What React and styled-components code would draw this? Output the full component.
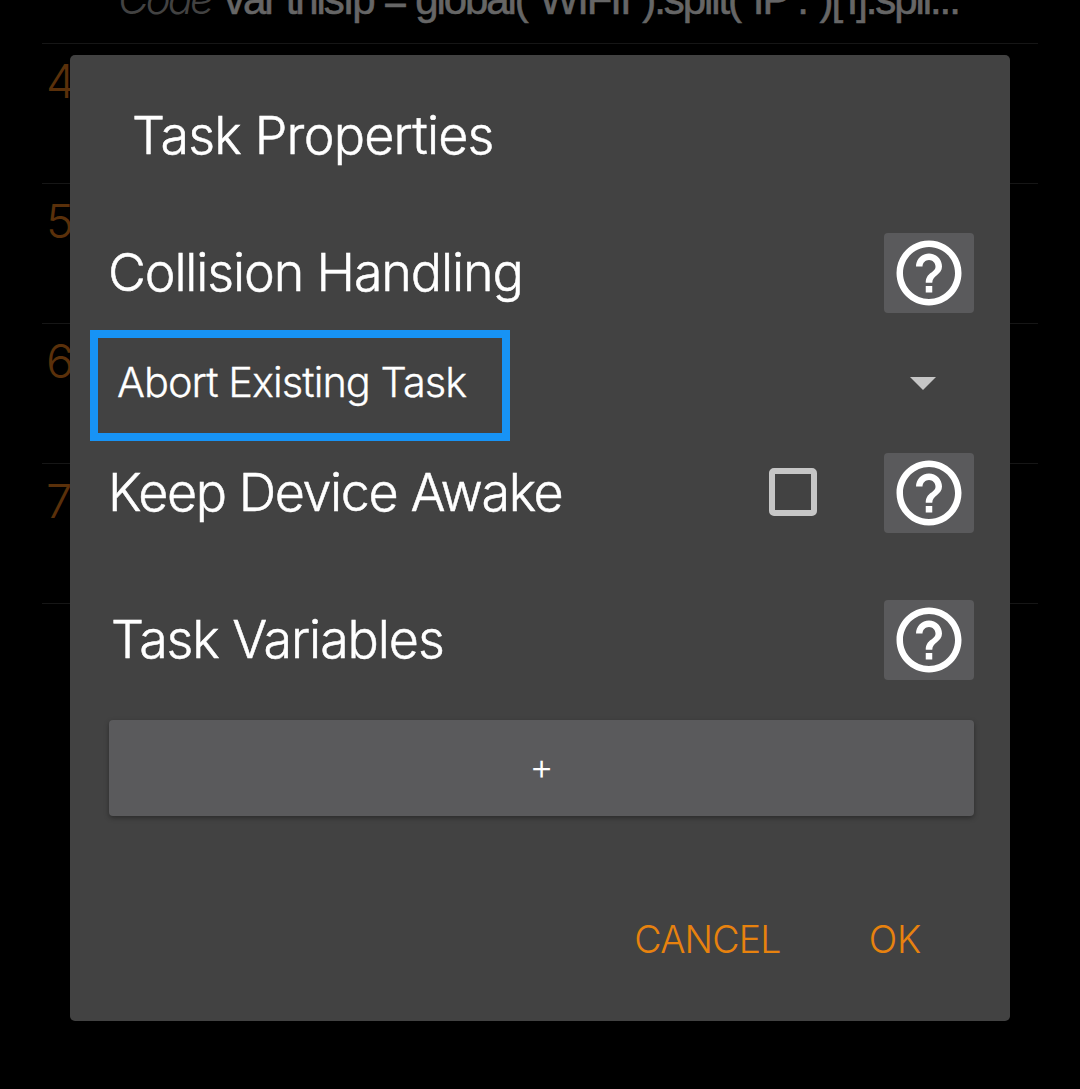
import React from "react";
import styled, { createGlobalStyle } from "styled-components";

const Global = createGlobalStyle`
  * { box-sizing: border-box; }
  body { margin: 0; background: #000; }
  button { border: 0; padding: 0; font: inherit; color: inherit; }
`;

const Screen = styled.div`
  position: relative;
  width: 1080px;
  height: 1089px;
  overflow: hidden;
  background: #000;
  font-family: Inter, "Liberation Sans", sans-serif;
  font-weight: 300;
`;

const ActionList = styled.div`
  display: flex;
  flex-direction: column;
  width: 996px;
  margin-left: 42px;
`;

const ActionRow = styled.div`
  height: ${(p) => (p.$first ? 44 : 140)}px;
  border-bottom: 1px solid #161616;
`;

const ActionNumber = styled.div`
  padding: 7px 0 0 4px;
  font-size: 47px;
  line-height: 60px;
  color: #5a300a;
`;

const CodeLine = styled.div`
  display: flex;
  margin-top: -27px;
  padding-left: 76px;
  line-height: 52px;
  white-space: pre;
`;

const CodeLabel = styled.span`
  width: 106px;
  font-size: 42px;
  font-style: italic;
  letter-spacing: -2.9px;
  color: #424242;
`;

const CodeText = styled.span`
  font-family: "Liberation Sans", sans-serif;
  font-size: 42px;
  font-weight: 400;
  letter-spacing: -2.08px;
  -webkit-text-stroke: 0.6px #666;
  color: #666;
`;

const CodeDigit = styled.span`
  font-family: Inter, sans-serif;
`;

const Dialog = styled.div`
  position: absolute;
  left: 70px;
  top: 55px;
  width: 940px;
  height: 966px;
  display: flex;
  flex-direction: column;
  padding: 0 36px 0 39px;
  border-radius: 5px;
  background: #424242;
  color: #fff;
`;

const Title = styled.div`
  margin: 50px 0 0 23px;
  height: 62px;
  font-size: 52px;
  line-height: 62px;
  letter-spacing: ${(p) => p.$track}px;
  -webkit-text-stroke: 0.5px #fff;
  white-space: nowrap;
`;

const Row = styled.div`
  display: flex;
  align-items: center;
  height: 80px;
  margin-top: ${(p) => p.$gap}px;
`;

const Label = styled.div`
  flex: 1;
  padding-left: ${(p) => p.$indent || 0}px;
  margin-left: -1px;
  font-size: 52px;
  line-height: 62px;
  letter-spacing: ${(p) => p.$track}px;
  -webkit-text-stroke: 0.5px #fff;
  white-space: nowrap;
`;

const HelpButton = styled.button`
  display: flex;
  align-items: center;
  justify-content: center;
  width: 90px;
  height: 80px;
  border-radius: 4px;
  background: #5a5a5c;
`;

const Checkbox = styled.div`
  width: 48px;
  height: 48px;
  margin: 0 67px 2px 0;
  border: 6px solid #c6c6c6;
  border-radius: 5px;
`;

const Spinner = styled.div`
  display: flex;
  align-items: center;
  justify-content: space-between;
  height: 112px;
  margin: 16px 0 0 -19px;
  padding-right: 38px;
`;

const Selected = styled.div`
  width: 420px;
  height: 111px;
  padding: 19px 0 0 19px;
  border: 8px solid #1793f5;
  font-size: 41.5px;
  line-height: 50px;
  letter-spacing: ${(p) => p.$track}px;
  -webkit-text-stroke: 0.3px #fff;
  white-space: nowrap;
`;

const Arrow = styled.svg`
  display: block;
  margin-top: -3px;
`;

const AddButton = styled.button`
  height: 96px;
  margin-top: 40px;
  border-radius: 4px;
  background: #5a5a5c;
  box-shadow: 0 2px 5px rgba(0, 0, 0, 0.35);
  font-size: 37px;
  line-height: 90px;
  padding-bottom: 2px;
`;

const Actions = styled.div`
  display: flex;
  justify-content: flex-end;
  gap: 88px;
  margin-top: 99px;
  padding-right: 53px;
  font-size: 37.5px;
  line-height: 50px;
  color: #e8820e;
`;

const Action = styled.button`
  background: none;
  letter-spacing: ${(p) => p.$track}px;
`;

function Help() {
  return (
    <HelpButton aria-label="Help">
      <svg width="78" height="78" viewBox="0 0 24 24" fill="#fff">
        <path d="M11 18h2v-2h-2v2zm1-16C6.48 2 2 6.48 2 12s4.48 10 10 10 10-4.48 10-10S17.52 2 12 2zm0 18c-4.41 0-8-3.59-8-8s3.59-8 8-8 8 3.59 8 8-3.59 8-8 8zm0-14c-2.21 0-4 1.79-4 4h2c0-1.1.9-2 2-2s2 .9 2 2c0 2-3 1.75-3 5h2c0-2.25 3-2.5 3-5 0-2.21-1.79-4-4-4z" />
      </svg>
    </HelpButton>
  );
}

export default function App() {
  return (
    <>
      <Global />
      <Screen>
        <ActionList>
          <ActionRow $first>
            <CodeLine>
              <CodeLabel>Code</CodeLabel>
              <CodeText>
                {'var thisIp = global("WIFII").split("IP :")['}
                <CodeDigit>1</CodeDigit>
                {"].spli..."}
              </CodeText>
            </CodeLine>
          </ActionRow>
          {[4, 5, 6, 7].map((n) => (
            <ActionRow key={n}>
              <ActionNumber>{n}</ActionNumber>
            </ActionRow>
          ))}
        </ActionList>
        <Dialog>
          <Title $track={-0.8}>Task Properties</Title>
          <Row $gap={66}>
            <Label $track={-1.15}>Collision Handling</Label>
            <Help />
          </Row>
          <Spinner>
            <Selected $track={-0.97}>Abort Existing Task</Selected>
            <Arrow width="26" height="13" viewBox="0 0 26 13">
              <path d="M0 0h26L13 13z" fill="#c6c6c6" />
            </Arrow>
          </Spinner>
          <Row $gap={12}>
            <Label $track={-1.4}>Keep Device Awake</Label>
            <Checkbox />
            <Help />
          </Row>
          <Row $gap={67}>
            <Label $indent={3} $track={-1.1}>Task Variables</Label>
            <Help />
          </Row>
          <AddButton>+</AddButton>
          <Actions>
            <Action $track={-0.8}>CANCEL</Action>
            <Action $track={-0.2}>OK</Action>
          </Actions>
        </Dialog>
      </Screen>
    </>
  );
}
